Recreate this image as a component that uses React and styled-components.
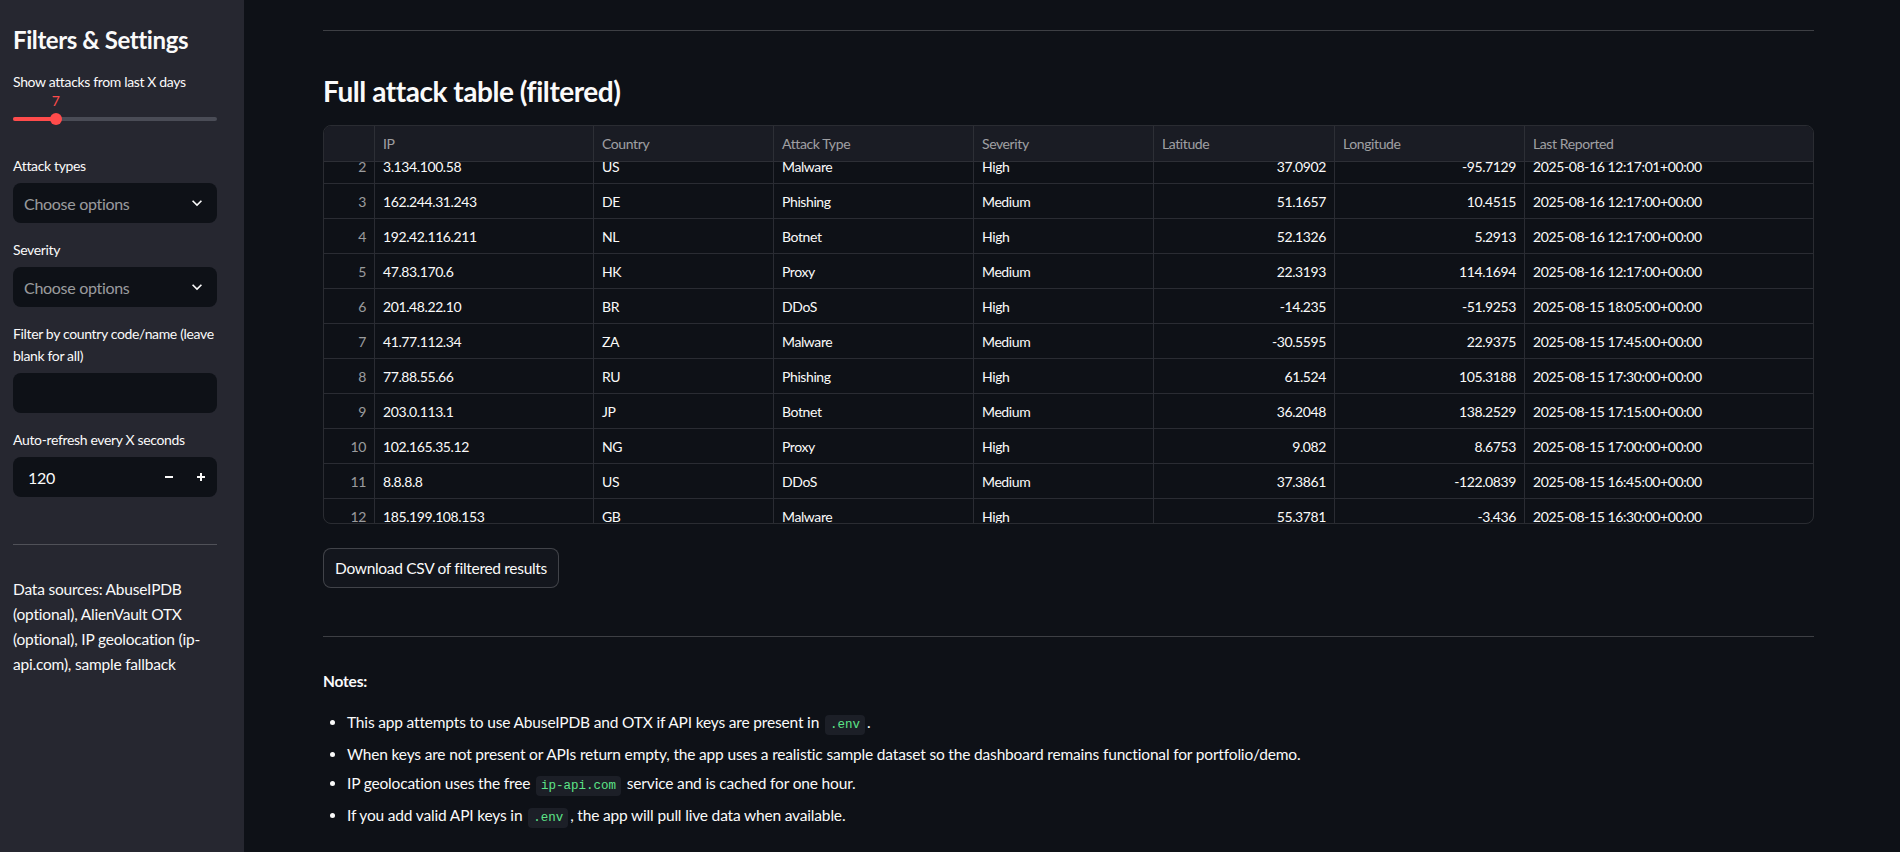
import React, { useLayoutEffect, useRef } from 'react';
import styled, { createGlobalStyle } from 'styled-components';

const FONT = `Lato, "Noto Sans", sans-serif`;
const MONO = `"Liberation Mono", "DejaVu Sans Mono", monospace`;

const GlobalStyle = createGlobalStyle`
  * { box-sizing: border-box; }
  body {
    margin: 0;
    background: #0e1117;
    color: #fafafa;
    font-family: ${FONT};
  }
`;

const Page = styled.div`
  display: flex;
  height: 852px;
  overflow: hidden;
`;

const Sidebar = styled.aside`
  width: 244px;
  flex-shrink: 0;
  background: #262730;
  padding: 25px 27px 0 13px;
  display: flex;
  flex-direction: column;
`;

const SideTitle = styled.h2`
  margin: 0 0 16px;
  font-size: 24px;
  line-height: 30px;
  font-weight: 700;
  letter-spacing: -0.4px;
`;

const Field = styled.div`
  display: flex;
  flex-direction: column;
  margin-bottom: 16px;
`;

const Label = styled.label`
  font-size: 14px;
  line-height: 22px;
  letter-spacing: -0.35px;
  margin-bottom: ${p => (p.$tight ? 0 : 6)}px;
`;

const SliderArea = styled.div`
  padding: 24px 0 18px;
`;

const Track = styled.div`
  position: relative;
  height: 4px;
  border-radius: 2px;
  background: #4a4c56;
`;

const Fill = styled.div`
  height: 100%;
  border-radius: 2px;
  background: #ff4b4b;
`;

const Thumb = styled.div`
  position: absolute;
  top: -4px;
  width: 12px;
  height: 12px;
  margin-left: -6px;
  border-radius: 50%;
  background: #ff4b4b;
`;

const ThumbValue = styled.div`
  position: absolute;
  bottom: 12px;
  transform: translateX(-50%);
  font-size: 14px;
  line-height: 16px;
  color: #ff4b4b;
`;

const InputBox = styled.div`
  height: 40px;
  border-radius: 8px;
  background: #0e1117;
  display: flex;
  align-items: center;
  padding: 0 ${p => (p.$stepper ? 0 : 10)}px 0 11px;
  font-size: 16px;
  letter-spacing: -0.3px;
`;

const Placeholder = styled.span`
  flex: 1;
  color: rgba(250, 250, 250, 0.6);
`;

const NumValue = styled.span`
  flex: 1;
  padding-left: 4px;
`;

const StepButton = styled.button`
  width: 32px;
  height: 40px;
  border: 0;
  padding: 0;
  background: transparent;
  color: #fafafa;
  display: flex;
  align-items: center;
  justify-content: center;
`;

const SideRule = styled.hr`
  margin: 31px 0 32px;
  border: 0;
  height: 1px;
  background: rgba(250, 250, 250, 0.2);
`;

const SideNote = styled.p`
  margin: 0;
  font-size: 15.5px;
  line-height: 25px;
  letter-spacing: -0.2px;
`;

const Main = styled.main`
  flex: 1;
  padding: 30px 86px 0 79px;
  display: flex;
  flex-direction: column;
`;

const Rule = styled.hr`
  margin: 0;
  border: 0;
  height: 1px;
  background: rgba(250, 250, 250, 0.2);
`;

const Heading = styled.h3`
  margin: 42px 0 16px;
  font-size: 28px;
  line-height: 36px;
  font-weight: 700;
  letter-spacing: -0.45px;
`;

const TableFrame = styled.div`
  border: 1px solid rgba(250, 250, 250, 0.12);
  border-radius: 8px;
  overflow: hidden;
  font-size: 14px;
  letter-spacing: -0.4px;
`;

const COLS = '51px 219px 180px 200px 180px 181px 190px 1fr';

const HeadRow = styled.div`
  display: grid;
  grid-template-columns: ${COLS};
  height: 36px;
  background: #1a1c24;
  border-bottom: 1px solid #2d2f36;
`;

const HeadCell = styled.div`
  display: flex;
  align-items: center;
  padding: 0 8px;
  color: rgba(250, 250, 250, 0.6);
  border-right: ${p => (p.$last ? 'none' : '1px solid #2d2f36')};
`;

const Body = styled.div`
  height: 361px;
  overflow: hidden;
`;

const Row = styled.div`
  display: grid;
  grid-template-columns: ${COLS};
  height: 35px;
  border-bottom: 1px solid #2a2c33;
`;

const Cell = styled.div`
  display: flex;
  align-items: center;
  justify-content: ${p => (p.$right ? 'flex-end' : 'flex-start')};
  padding: 0 8px;
  color: ${p => (p.$muted ? 'rgba(250, 250, 250, 0.6)' : '#fafafa')};
  border-right: ${p => (p.$last ? 'none' : '1px solid #2a2c33')};
  white-space: nowrap;
`;

const DownloadButton = styled.button`
  align-self: flex-start;
  margin: 24px 0 48px;
  height: 40px;
  padding: 0 11px;
  border-radius: 8px;
  border: 1px solid rgba(250, 250, 250, 0.2);
  background: #13161d;
  color: #fafafa;
  font-family: ${FONT};
  font-size: 15.5px;
  letter-spacing: -0.3px;
`;

const NotesTitle = styled.p`
  margin: 31px 0 14px;
  font-size: 15.5px;
  line-height: 26px;
  font-weight: 700;
  letter-spacing: -0.2px;
`;

const NoteList = styled.ul`
  margin: 0;
  padding-left: 24px;
  font-size: 15.5px;
  line-height: 29px;
  letter-spacing: -0.17px;
`;

const Code = styled.code`
  font-family: ${MONO};
  font-size: 12.5px;
  letter-spacing: 0;
  color: #5ce488;
  background: #1c1f27;
  border-radius: 4px;
  padding: 3px 5px;
  margin: 0 2px;
`;

const ChevronDown = () => (
  <svg width="20" height="20" viewBox="0 0 24 24" fill="#fafafa">
    <path d="M7.41 8.59L12 13.17l4.59-4.58L18 10l-6 6-6-6 1.41-1.41z" />
  </svg>
);

const MinusIcon = () => (
  <svg width="10" height="10" viewBox="0 0 10 10">
    <path d="M1 5h8" stroke="#fafafa" strokeWidth="2" />
  </svg>
);

const PlusIcon = () => (
  <svg width="10" height="10" viewBox="0 0 10 10">
    <path d="M1 5h8M5 1v8" stroke="#fafafa" strokeWidth="2" />
  </svg>
);

const rows = [
  [1, '45.155.205.233', 'RU', 'Bruteforce', 'High', '55.7386', '37.6068', '2025-08-16 12:17:02+00:00'],
  [2, '3.134.100.58', 'US', 'Malware', 'High', '37.0902', '-95.7129', '2025-08-16 12:17:01+00:00'],
  [3, '162.244.31.243', 'DE', 'Phishing', 'Medium', '51.1657', '10.4515', '2025-08-16 12:17:00+00:00'],
  [4, '192.42.116.211', 'NL', 'Botnet', 'High', '52.1326', '5.2913', '2025-08-16 12:17:00+00:00'],
  [5, '47.83.170.6', 'HK', 'Proxy', 'Medium', '22.3193', '114.1694', '2025-08-16 12:17:00+00:00'],
  [6, '201.48.22.10', 'BR', 'DDoS', 'High', '-14.235', '-51.9253', '2025-08-15 18:05:00+00:00'],
  [7, '41.77.112.34', 'ZA', 'Malware', 'Medium', '-30.5595', '22.9375', '2025-08-15 17:45:00+00:00'],
  [8, '77.88.55.66', 'RU', 'Phishing', 'High', '61.524', '105.3188', '2025-08-15 17:30:00+00:00'],
  [9, '203.0.113.1', 'JP', 'Botnet', 'Medium', '36.2048', '138.2529', '2025-08-15 17:15:00+00:00'],
  [10, '102.165.35.12', 'NG', 'Proxy', 'High', '9.082', '8.6753', '2025-08-15 17:00:00+00:00'],
  [11, '8.8.8.8', 'US', 'DDoS', 'Medium', '37.3861', '-122.0839', '2025-08-15 16:45:00+00:00'],
  [12, '185.199.108.153', 'GB', 'Malware', 'High', '55.3781', '-3.436', '2025-08-15 16:30:00+00:00'],
  [13, '91.198.174.192', 'NL', 'Proxy', 'Medium', '52.3676', '4.9041', '2025-08-15 16:15:00+00:00'],
];

const headers = ['', 'IP', 'Country', 'Attack Type', 'Severity', 'Latitude', 'Longitude', 'Last Reported'];

function AttackTable() {
  const bodyRef = useRef(null);
  useLayoutEffect(() => {
    if (bodyRef.current) bodyRef.current.scrollTop = 48;
  }, []);

  return (
    <TableFrame>
      <HeadRow>
        {headers.map((h, i) => (
          <HeadCell key={i} $last={i === headers.length - 1}>{h}</HeadCell>
        ))}
      </HeadRow>
      <Body ref={bodyRef}>
        {rows.map(r => (
          <Row key={r[0]}>
            <Cell $right $muted>{r[0]}</Cell>
            <Cell>{r[1]}</Cell>
            <Cell>{r[2]}</Cell>
            <Cell>{r[3]}</Cell>
            <Cell>{r[4]}</Cell>
            <Cell $right>{r[5]}</Cell>
            <Cell $right>{r[6]}</Cell>
            <Cell $last>{r[7]}</Cell>
          </Row>
        ))}
      </Body>
    </TableFrame>
  );
}

export default function App() {
  const days = 7;
  const pct = 21;

  return (
    <>
      <GlobalStyle />
      <Page>
        <Sidebar>
          <SideTitle>Filters &amp; Settings</SideTitle>

          <Field>
            <Label $tight>Show attacks from last X days</Label>
            <SliderArea>
              <Track>
                <Fill style={{ width: `${pct}%` }} />
                <Thumb style={{ left: `${pct}%` }} />
                <ThumbValue style={{ left: `${pct}%` }}>{days}</ThumbValue>
              </Track>
            </SliderArea>
          </Field>

          <Field>
            <Label>Attack types</Label>
            <InputBox>
              <Placeholder>Choose options</Placeholder>
              <ChevronDown />
            </InputBox>
          </Field>

          <Field>
            <Label>Severity</Label>
            <InputBox>
              <Placeholder>Choose options</Placeholder>
              <ChevronDown />
            </InputBox>
          </Field>

          <Field>
            <Label>Filter by country code/name (leave blank for all)</Label>
            <InputBox />
          </Field>

          <Field>
            <Label>Auto-refresh every X seconds</Label>
            <InputBox $stepper>
              <NumValue>120</NumValue>
              <StepButton><MinusIcon /></StepButton>
              <StepButton><PlusIcon /></StepButton>
            </InputBox>
          </Field>

          <SideRule />
          <SideNote>
            Data sources: AbuseIPDB (optional), AlienVault OTX (optional), IP geolocation (ip-api.com), sample fallback
          </SideNote>
        </Sidebar>

        <Main>
          <Rule />
          <Heading>Full attack table (filtered)</Heading>
          <AttackTable />
          <DownloadButton>Download CSV of filtered results</DownloadButton>
          <Rule />
          <NotesTitle>Notes:</NotesTitle>
          <NoteList>
            <li>This app attempts to use AbuseIPDB and OTX if API keys are present in <Code>.env</Code>.</li>
            <li>When keys are not present or APIs return empty, the app uses a realistic sample dataset so the dashboard remains functional for portfolio/demo.</li>
            <li>IP geolocation uses the free <Code>ip-api.com</Code> service and is cached for one hour.</li>
            <li>If you add valid API keys in <Code>.env</Code>, the app will pull live data when available.</li>
          </NoteList>
        </Main>
      </Page>
    </>
  );
}
